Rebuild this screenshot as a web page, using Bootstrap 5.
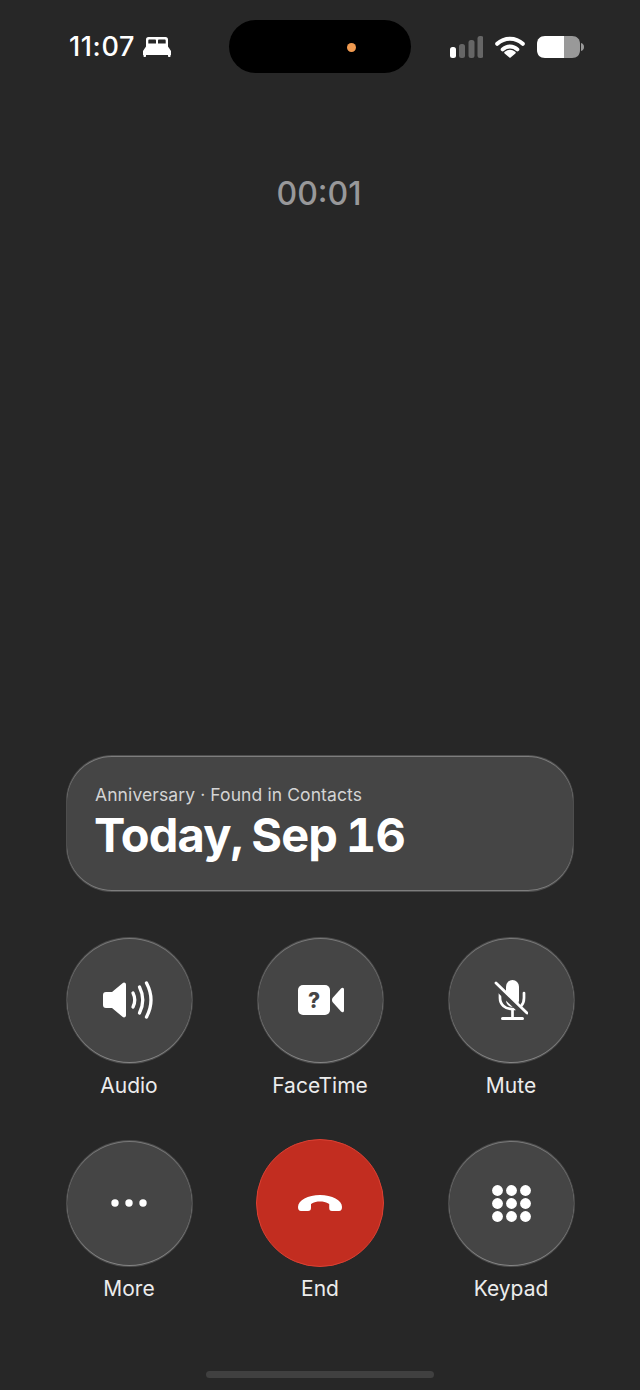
<!DOCTYPE html>
<html lang="en">
<head>
  <meta charset="UTF-8">
  <meta name="viewport" content="width=device-width, initial-scale=1">
  <title>Call</title>
  <link href="https://cdn.jsdelivr.net/npm/bootstrap@5.3.0/dist/css/bootstrap.min.css" rel="stylesheet">
  <style>
    body { background-color: #272727; font-family: Inter, "Liberation Sans", sans-serif; color: #fff; }
    .call-screen { width: 640px; height: 1390px; overflow: hidden; }
    .status-row { padding: 20px 0 0 69px; height: 73px; }
    .status-left { width: 160px; gap: 8px; padding-top: 1px; }
    .status-time { font-size: 27px; font-weight: 500; line-height: 32px; letter-spacing: .6px; }
    .island { width: 182px; height: 53px; background-color: #000; border-radius: 27px; padding-left: 118px; }
    .island-dot { width: 9px; height: 9px; margin-top: 1px; border-radius: 50%; background-color: #f09a50; }
    .status-right { margin-left: 39px; gap: 12px; }
    .call-timer { margin-top: 101px; margin-bottom: -1px; font-size: 32px; font-weight: 500; line-height: 40px; color: #98989a; text-align: center; padding-right: 2px; }
    .glass-pill { width: 508px; height: 137.5px; margin: 541.5px 0 0 66px; padding: 27.5px 28px 0; background-color: #454545; border: 1px solid rgba(255,255,255,.05); border-radius: 46px; box-shadow: inset 0 1px 0 rgba(255,255,255,.3), inset 0 -1px 0 rgba(255,255,255,.3); }
    .pill-sub { font-size: 17.5px; line-height: 24px; color: #d4d4d4; letter-spacing: .1px; }
    .pill-title { margin-left: -1px; font-size: 47px; font-weight: 700; line-height: 56px; letter-spacing: -.85px; word-spacing: -3px; font-variant-numeric: tabular-nums; }
    .action-grid { grid-template-columns: repeat(3, 127px); justify-content: space-between; row-gap: 41.5px; width: 509px; margin: 44.5px 0 0 65.5px; }
    .glass-btn { width: 127px; height: 127px; padding: 0; background-color: #454545; border: 1px solid rgba(255,255,255,.04); box-shadow: inset 0 1px 0 rgba(255,255,255,.28), inset 0 -1px 0 rgba(255,255,255,.34); }
    .glass-btn.end-btn { width: 128px; height: 128px; margin: -.5px; background-color: #c22d20; border-color: #dc4133; box-shadow: none; }
    .action-label { margin-top: 10.5px; font-size: 21px; line-height: 24px; color: #ececec; }
    .home-bar { width: 228px; height: 7px; margin: 70px auto 0; background-color: #404040; border-radius: 4px; }
  </style>
</head>
<body>
  <div class="call-screen">
    <!-- status bar -->
    <div class="status-row d-flex align-items-center">
      <div class="status-left d-flex align-items-center">
        <span class="status-time">11:07</span>
        <svg width="28" height="20" viewBox="0 0 28 20" fill="#fff">
          <path fill-rule="evenodd" d="M5.500 0h17C24.200 0 25 .9 25 2.500V10H3V2.500C3 .9 3.800 0 5.500 0zM6.500 2.500c-.8 0-1.200.4-1.200 1.200V6.500h7.700V3.700c0-.8-.4-1.200-1.200-1.200zM16.200 2.500c-.8 0-1.200.4-1.200 1.200V6.500h7.700V3.700c0-.8-.4-1.200-1.200-1.200z"/>
          <path d="M3 9.500h22l3 4.500v4H0v-4z"/>
          <rect x=".5" y="17" width="2.500" height="3" rx=".8"/>
          <rect x="25" y="17" width="2.500" height="3" rx=".8"/>
        </svg>
      </div>
      <div class="island d-flex align-items-center"><span class="island-dot"></span></div>
      <div class="status-right d-flex align-items-center">
        <svg width="33" height="22" viewBox="0 0 33 22">
          <rect x="0" y="11" width="6" height="11" rx="2.500" fill="#fff"/>
          <rect x="9" y="8" width="6" height="14" rx="2.500" fill="#666"/>
          <rect x="18.500" y="4" width="6" height="18" rx="2.500" fill="#666"/>
          <rect x="27.500" y="0" width="6" height="22" rx="2.500" fill="#666"/>
        </svg>
        <svg width="30" height="23" viewBox="0 0 30 23">
          <g fill="none" stroke="#fff" stroke-width="4" stroke-linecap="round">
            <path d="M2.200 8.800a18.500 18.500 0 0 1 25.600 0"/>
            <path d="M7.700 14.400a10.500 10.500 0 0 1 14.600 0"/>
          </g>
          <path d="M15 23l-5.400-4.600c-.6-.6-.5-1.300.1-1.700a8.800 8.800 0 0 1 10.600 0c.6.400.7 1.100.1 1.700z" fill="#fff"/>
        </svg>
        <svg width="47" height="22" viewBox="0 0 47 22">
          <path d="M8 0h19v22H8c-5 0-8-3-8-8V8c0-5 3-8 8-8z" fill="#fff"/>
          <path d="M27 0h8c5 0 8 3 8 8v6c0 5-3 8-8 8h-8z" fill="#999"/>
          <path d="M44 7c2 .4 3 2 3 4s-1 3.600-3 4z" fill="#999"/>
        </svg>
      </div>
    </div>

    <div class="call-timer">00:01</div>

    <div class="glass-pill">
      <div class="pill-sub">Anniversary · Found in Contacts</div>
      <div class="pill-title">Today, Sep 16</div>
    </div>

    <div class="action-grid d-grid">
      <div class="text-center">
        <button class="glass-btn btn rounded-circle d-flex align-items-center justify-content-center" type="button">
          <svg width="52" height="38" viewBox="0 0 52 38">
            <path fill="#fff" d="M3 11h6L19.500 2.200c1.500-1.300 3.500-.5 3.500 1.500V34.300c0 2-2 2.800-3.500 1.500L9 27H3c-2 0-3-1-3-3V14c0-2 1-3 3-3z"/>
            <g fill="none" stroke="#fff" stroke-width="3.300" stroke-linecap="round">
              <path d="M30 12q3.500 7 0 14"/>
              <path d="M36.500 6q6.500 13 0 26"/>
              <path d="M43.500 2q9 17 0 34"/>
            </g>
          </svg>
        </button>
        <div class="action-label">Audio</div>
      </div>
      <div class="text-center">
        <button class="glass-btn btn rounded-circle d-flex align-items-center justify-content-center" type="button">
          <svg width="48" height="30" viewBox="-2 0 48 30">
            <rect x="0" y="0" width="32" height="30" rx="5" fill="#fff"/>
            <text x="16" y="23" text-anchor="middle" font-family="Inter, sans-serif" font-size="21" font-weight="800" fill="#454545">?</text>
            <path fill="#fff" d="M34.500 13L43 3.500c1.500-1.500 3-.7 3 1V25.500c0 1.700-1.500 2.500-3 1L34.500 17c-.7-1.300-.7-2.700 0-4z"/>
          </svg>
        </button>
        <div class="action-label">FaceTime</div>
      </div>
      <div class="text-center">
        <button class="glass-btn btn rounded-circle d-flex align-items-center justify-content-center" type="button">
          <svg width="34" height="43" viewBox="0 0 34 43">
            <rect x="12" y="1" width="13" height="27" rx="6.500" fill="#fff"/>
            <g fill="none" stroke="#fff" stroke-width="2.700">
              <path d="M6 14v5c0 6.500 5 11 12.500 11S30 25.500 30 19v-5" stroke-linecap="round"/>
              <path d="M18.500 30v8"/>
              <path d="M8.500 39.500h20" stroke-width="3" stroke-linecap="round"/>
            </g>
            <path d="M0 6.500l31 30" stroke="#454545" stroke-width="5" fill="none"/>
            <path d="M2 4l31 30" stroke="#fff" stroke-width="2.800" stroke-linecap="round" fill="none"/>
          </svg>
        </button>
        <div class="action-label">Mute</div>
      </div>
      <div class="text-center">
        <button class="glass-btn btn rounded-circle d-flex align-items-center justify-content-center" type="button">
          <svg width="36" height="8" viewBox="0 0 36 8" fill="#fff">
            <circle cx="4" cy="4" r="3.700"/>
            <circle cx="18" cy="4" r="3.700"/>
            <circle cx="32" cy="4" r="3.700"/>
          </svg>
        </button>
        <div class="action-label">More</div>
      </div>
      <div class="text-center">
        <button class="glass-btn end-btn btn rounded-circle d-flex align-items-center justify-content-center" type="button">
          <svg width="44" height="16" viewBox="0 0 44 16">
            <path fill="#fff" d="M0 12C0 5 10 0 22 0S44 5 44 12c0 2.500-1 4-3 4h-7c-2 0-2.800-1-2.800-3V9C28 7 25 6.500 22 6.500S16 7 13 9v4c0 2-1 3-3 3H3c-2 0-3-1.500-3-4z"/>
          </svg>
        </button>
        <div class="action-label">End</div>
      </div>
      <div class="text-center">
        <button class="glass-btn btn rounded-circle d-flex align-items-center justify-content-center" type="button">
          <svg width="39" height="37" viewBox="0 0 39 37" fill="#fff">
            <circle cx="5.500" cy="5.500" r="5.400"/><circle cx="19.500" cy="5.500" r="5.400"/><circle cx="33.500" cy="5.500" r="5.400"/>
            <circle cx="5.500" cy="18.500" r="5.400"/><circle cx="19.500" cy="18.500" r="5.400"/><circle cx="33.500" cy="18.500" r="5.400"/>
            <circle cx="5.500" cy="31.500" r="5.400"/><circle cx="19.500" cy="31.500" r="5.400"/><circle cx="33.500" cy="31.500" r="5.400"/>
          </svg>
        </button>
        <div class="action-label">Keypad</div>
      </div>
    </div>

    <div class="home-bar"></div>
  </div>
  <script src="https://cdn.jsdelivr.net/npm/bootstrap@5.3.0/dist/js/bootstrap.bundle.min.js"></script>
</body>
</html>
